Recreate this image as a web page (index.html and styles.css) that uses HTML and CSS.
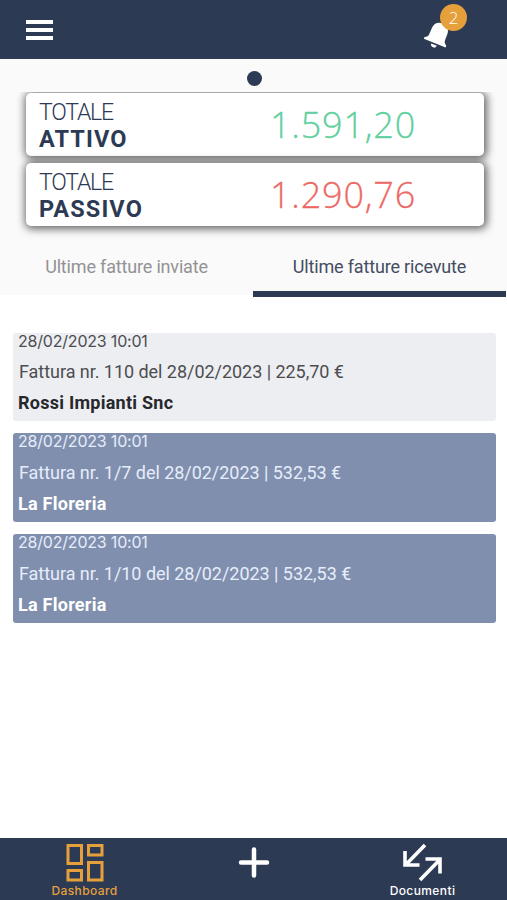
FILE: index.html
```html
<!DOCTYPE html>
<html lang="it">
<head>
  <meta charset="UTF-8">
  <meta name="viewport" content="width=device-width, initial-scale=1.0">
  <title>Dashboard</title>
  <link rel="stylesheet" href="styles.css">
</head>
<body>
  <div class="app">
    <header class="header">
      <button class="menu-btn" aria-label="Menu">
        <span></span>
        <span></span>
        <span></span>
      </button>
      <div class="notifications">
        <svg class="bell" width="30" height="30" viewBox="0 0 30 30">
          <g transform="rotate(22 15 15)" fill="#fff">
            <path d="M15 2.500c-5.200 0-8.200 3.300-8.300 8l-.2 7c-.1 2-1.100 3-3.200 4.400v1.900h23.400v-1.900c-2.100-1.400-3.100-2.400-3.200-4.400l-.2-7c-.1-4.700-3.100-8-8.300-8z"/>
            <path d="M12 25.500h6a3 2.800 0 0 1-6 0z"/>
          </g>
        </svg>
        <span class="badge">2</span>
      </div>
    </header>

    <section class="summary">
      <div class="dot"></div>
      <div class="totals">
        <div class="total-card">
          <div class="total-label">
            <span>TOTALE</span>
            <strong>ATTIVO</strong>
          </div>
          <div class="total-value positive">1.591,20</div>
        </div>
        <div class="total-card">
          <div class="total-label">
            <span>TOTALE</span>
            <strong>PASSIVO</strong>
          </div>
          <div class="total-value negative">1.290,76</div>
        </div>
      </div>
      <nav class="tabs">
        <a class="tab"><span>Ultime fatture inviate</span></a>
        <a class="tab active"><span>Ultime fatture ricevute</span></a>
      </nav>
    </section>

    <main class="invoice-list">
      <article class="invoice read">
        <time class="invoice-date">28/02/2023 10:01</time>
        <p class="invoice-info">Fattura nr. 110 del 28/02/2023 | 225,70 €</p>
        <p class="invoice-name">Rossi Impianti Snc</p>
      </article>
      <article class="invoice">
        <time class="invoice-date">28/02/2023 10:01</time>
        <p class="invoice-info">Fattura nr. 1/7 del 28/02/2023 | 532,53 €</p>
        <p class="invoice-name">La Floreria</p>
      </article>
      <article class="invoice">
        <time class="invoice-date">28/02/2023 10:01</time>
        <p class="invoice-info">Fattura nr. 1/10 del 28/02/2023 | 532,53 €</p>
        <p class="invoice-name">La Floreria</p>
      </article>
    </main>

    <footer class="bottom-nav">
      <a class="nav-item selected">
        <svg width="40" height="40" viewBox="0 0 40 40" fill="none" stroke="currentColor" stroke-width="3">
          <path d="M3 2.500h13.500v18H3zM23.500 2.500h13.500v9.500h-13.500zM3 27.500h13.500v9.500H3zM23.500 19.500h13.500v17.500h-13.500z"/>
        </svg>
        <span>Dashboard</span>
      </a>
      <a class="nav-item">
        <svg width="40" height="40" viewBox="0 0 40 40" fill="none" stroke="currentColor" stroke-width="4.500" stroke-linecap="round">
          <path d="M20 6.500v26M7 19.500h26"/>
        </svg>
      </a>
      <a class="nav-item">
        <svg width="40" height="40" viewBox="0 0 40 40" fill="none" stroke="currentColor" stroke-width="3.600">
          <path d="M22 2L3 21.500M2 8v14h14.500M17 37L36.500 17M22.500 16h14.500v14.500"/>
        </svg>
        <span>Documenti</span>
      </a>
    </footer>
  </div>
</body>
</html>
```
FILE: styles.css
```css
* {
  box-sizing: border-box;
  margin: 0;
  padding: 0;
}

:root {
  --navy: #2d3a54;
  --orange: #e5a03c;
  --slate: #818fae;
  --gray-100: #fafafa;
  --gray-200: #edeef2;
  --font-main: Roboto, "Open Sans", sans-serif;
  --font-number: "Open Sans", sans-serif;
  --font-date: Inter, sans-serif;
}

body {
  font-family: var(--font-main);
  background-color: #fff;
}

.app {
  display: flex;
  flex-direction: column;
  height: 900px;
  overflow: hidden;
}

/* Header */
.header {
  display: flex;
  justify-content: space-between;
  flex: none;
  height: 59px;
  padding: 20px 40px 0 26px;
  background-color: var(--navy);
}

.menu-btn {
  display: flex;
  flex-direction: column;
  gap: 3.500px;
  width: 27px;
  height: 20px;
  border: none;
  background: none;
}

.menu-btn span {
  height: 4.300px;
  background-color: #fff;
}

.notifications {
  position: relative;
  width: 44px;
}

.bell {
  display: block;
}

.badge {
  position: absolute;
  top: -16px;
  left: 17px;
  width: 27px;
  height: 27px;
  border-radius: 50%;
  background-color: var(--orange);
  color: #fff;
  font: 300 17px/28px var(--font-number);
  text-align: center;
}

/* Totals */
.summary {
  display: flex;
  flex: none;
  flex-direction: column;
  height: 236px;
  background-color: var(--gray-100);
}

.dot {
  flex: none;
  width: 15px;
  height: 15px;
  margin: 12px 0 6px 247px;
  border-radius: 50%;
  background-color: var(--navy);
}

/* clips the card shadows at the top edge */
.totals {
  display: flex;
  flex: none;
  flex-direction: column;
  gap: 7px;
  height: 149px;
  padding: 1px 23px 0 26px;
  overflow: hidden;
}

.total-card {
  display: flex;
  align-items: center;
  flex: none;
  height: 63px;
  border-radius: 5px;
  background-color: #fff;
  box-shadow: 1px 1px 9px 2px rgba(0, 0, 0, 0.6);
}

.total-label {
  display: flex;
  flex-direction: column;
  width: 244px;
  padding: 2px 0 0 13px;
  font-size: 23px;
  font-weight: 300;
  line-height: 26px;
  letter-spacing: -1.200px;
  color: var(--navy);
}

.total-label strong {
  font-size: 23.500px;
  font-weight: 700;
  letter-spacing: 1.100px;
}

.total-value {
  font: 300 36px/60px var(--font-number);
  letter-spacing: 0.800px;
  -webkit-text-stroke: 0.300px currentColor;
}

.positive {
  color: #5fd0a0;
}

.negative {
  color: #ec6a66;
}

/* Tabs */
.tabs {
  display: flex;
  flex: none;
}

.tab {
  display: flex;
  justify-content: center;
  width: 253px;
  padding-top: 14px;
  font-size: 18px;
  line-height: 24px;
  letter-spacing: -0.170px;
  color: #929295;
}

/* the underline hangs slightly below the summary block */
.tab.active {
  height: 56px;
  border-bottom: 6px solid var(--navy);
  color: #454d62;
}

/* Invoices */
.invoice-list {
  display: flex;
  flex: 1;
  flex-direction: column;
  gap: 12px;
  padding: 38px 11px 0 13px;
}

.invoice {
  height: 89px;
  padding-left: 5px;
  border-radius: 3px;
  background-color: var(--slate);
  color: #e6edfb;
  white-space: nowrap;
}

.invoice-date {
  display: block;
  font: 400 16px/16px var(--font-date);
  letter-spacing: -0.200px;
}

.invoice-info {
  padding: 12px 0 0 1px;
  font-size: 18px;
  line-height: 24px;
  letter-spacing: -0.040px;
}

.invoice-name {
  margin-top: 7px;
  font-size: 18px;
  font-weight: 700;
  line-height: 24px;
  letter-spacing: 0.250px;
  color: #fff;
}

.invoice.read {
  height: 88px;
  background-color: var(--gray-200);
  color: #4c4d50;
}

.read .invoice-info {
  padding-top: 11px;
}

.read .invoice-name {
  color: #26282c;
}

/* Bottom navigation */
.bottom-nav {
  display: flex;
  justify-content: space-between;
  flex: none;
  height: 62px;
  background-color: var(--navy);
}

.nav-item {
  display: flex;
  flex-direction: column;
  align-items: center;
  width: 169px;
  padding-top: 5px;
  color: #fff;
  font: 500 12px/16px var(--font-date);
  letter-spacing: 0.400px;
}

.nav-item.selected {
  color: var(--orange);
}
```
